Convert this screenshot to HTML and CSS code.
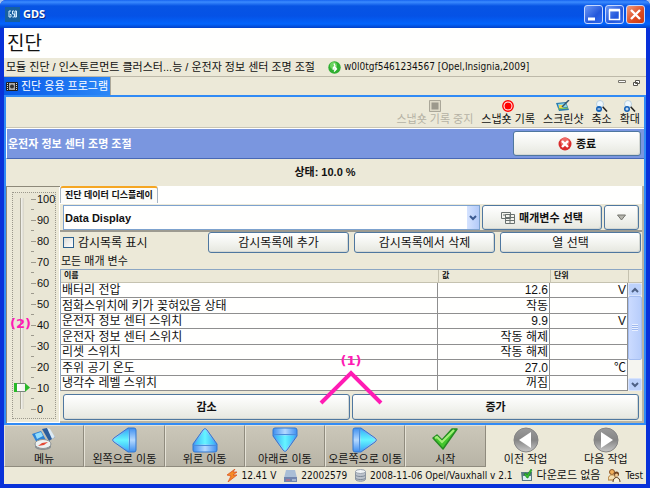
FILE: index.html
```
<!DOCTYPE html>
<html lang="ko">
<head>
<meta charset="utf-8">
<title>GDS</title>
<link rel="stylesheet" href="styles.css">
</head>
<body>
<div class="window">
  <header class="titlebar">
    <svg class="app-icon" width="15" height="15" viewBox="0 0 15 15" aria-hidden="true">
      <rect width="15" height="15" fill="#17609f"/>
      <path d="M6 4H4v6h2V7.500H5M9 4H7.500v3h2v3H7.500M11.500 4H10v6h1.500V4" fill="none" stroke="#d8efff" stroke-width="1"/>
    </svg>
    <span class="app-name">GDS</span>
    <div class="caption-buttons">
      <button class="caption" aria-label="최소화"><svg width="17" height="17" viewBox="0 0 17 17"><path d="M3 13h7" stroke="#fff" stroke-width="3"/></svg></button>
      <button class="caption" aria-label="최대화"><svg width="17" height="17" viewBox="0 0 17 17"><path d="M3.500 4.500h10v9h-10z" fill="none" stroke="#fff" stroke-width="1.500"/><path d="M3 4h11" stroke="#fff" stroke-width="2.500"/></svg></button>
      <button class="caption caption-close" aria-label="닫기"><svg width="17" height="17" viewBox="0 0 17 17"><path d="M4 4l9 9M13 4l-9 9" stroke="#fff" stroke-width="2.400"/></svg></button>
    </div>
  </header>

  <div class="body">
    <h1 class="page-title">진단</h1>
    <div class="crumbs">
      <span>모듈 진단 / 인스투르먼트 클러스터...능 / 운전자 정보 센터 조명 조절</span>
      <svg width="13" height="13" viewBox="0 0 13 13" aria-hidden="true"><circle cx="6.500" cy="6.500" r="6.200" fill="#2faf31"/><circle cx="5.500" cy="4.500" r="3.500" fill="#6bd45f"/><path d="M6 2.500l1 2.500-2 2M6.500 5.500L8.500 8 6 10.500M4.500 8h3" fill="none" stroke="#fff" stroke-width="1.300"/></svg>
      <span class="vin">w0l0tgf5461234567 [Opel,Insignia,2009]</span>
    </div>

    <div class="view-tabs">
      <a class="view-tab" href="#app">
        <svg width="12" height="9" viewBox="0 0 12 9" aria-hidden="true"><rect width="12" height="9" rx="1" fill="#222"/><rect x="3" y="1" width="6" height="7" fill="#aaa"/><circle cx="6" cy="4.500" r="2" fill="#333"/><path d="M1.500 1v7M10.500 1v7" stroke="#ddd" stroke-dasharray="1 1"/></svg>
        진단 응용 프로그램
      </a>
      <svg class="view-controls" width="22" height="8" viewBox="0 0 22 8" aria-hidden="true"><path d="M.5 1.500h7v2h-7z" fill="#fff" stroke="#77756c"/><path d="M17.500 1.500h4v3h-4zM15.500 3.500h4v3h-4z" fill="#fff" stroke="#55534c"/></svg>
    </div>

    <main class="frame" id="app">
      <div class="toolbar">
        <button class="tool" disabled><svg width="12" height="12" viewBox="0 0 12 12"><path d="M.5.500h11v11H.500z" fill="#dedac8" stroke="#aaa799"/><path d="M2.500 2.500h7v7h-7z" fill="#9c998c"/></svg>스냅숏 기록 중지</button>
        <button class="tool"><svg width="12" height="12" viewBox="0 0 12 12"><circle cx="6" cy="6" r="5.200" fill="#fff" stroke="#f00" stroke-width="1.400"/><circle cx="6" cy="6" r="3.500" fill="#f00"/></svg>스냅숏 기록</button>
        <button class="tool"><svg width="14" height="12" viewBox="0 0 14 12"><path d="M0 3l10-1 3 8-10 1z" fill="#2b7cae"/><path d="M2 4l8-1 1 4-8 1z" fill="#8ed8e8"/><path d="M3 5h4v3H3z" fill="#f3d84c"/><path d="M13 0L6 7" stroke="#33566c" stroke-width="1.500"/><path d="M2 9l10-1" stroke="#8bcf51"/></svg>스크린샷</button>
        <button class="tool"><svg width="13" height="12" viewBox="0 0 13 12"><path d="M7 6l5 5.500" stroke="#222" stroke-width="1.500"/><circle cx="5" cy="4" r="3.500" fill="#edf7fd" stroke="#b9cfdf"/><circle cx="4" cy="9" r="3" fill="#1462b9"/><path d="M2.500 9h3" stroke="#fff"/></svg>축소</button>
        <button class="tool"><svg width="13" height="12" viewBox="0 0 13 12"><path d="M7 6l5 5.500" stroke="#222" stroke-width="1.500"/><circle cx="5" cy="4" r="3.500" fill="#edf7fd" stroke="#b9cfdf"/><circle cx="4" cy="9" r="3" fill="#1462b9"/><path d="M2.500 9h3M4 7.500v3" stroke="#fff"/></svg>확대</button>
      </div>

      <div class="banner">
        <h2 class="banner-title">운전자 정보 센터 조명 조절</h2>
        <button class="btn btn-exit"><svg width="14" height="14" viewBox="0 0 14 14" aria-hidden="true"><circle cx="7" cy="7" r="6.500" fill="#d92b2b"/><circle cx="7" cy="5" r="4.500" fill="#ee6b66"/><path d="M4 4l6 6M10 4l-6 6" stroke="#fff" stroke-width="2.400"/></svg>종료</button>
      </div>

      <p class="state">상태: 10.0 %</p>

      <div class="work">
        <section class="gauge">
          <div class="gauge-inner">
            <input class="slider" type="range" min="0" max="100" value="10" aria-label="조명 밝기">
            <ol class="scale">
              <li>100</li><li></li><li>90</li><li></li><li>80</li><li></li><li>70</li><li></li><li>60</li><li></li><li>50</li><li></li><li>40</li><li></li><li>30</li><li></li><li>20</li><li></li><li>10</li><li></li><li>0</li>
            </ol>
          </div>
          <span class="note note-gauge">(2)</span>
        </section>

        <section class="data">
          <div class="data-tabs"><a class="data-tab" href="#params">진단 데이터 디스플레이</a></div>
          <div class="row row-select">
            <div class="select-box">
              <select aria-label="데이터 목록"><option>Data Display</option></select>
              <span class="select-arrow"><svg width="8" height="6" viewBox="0 0 8 6" aria-hidden="true"><path d="M1 1l3 3 3-3" fill="none" stroke="#3c5a91" stroke-width="2"/></svg></span>
            </div>
            <button class="btn btn-param"><svg width="14" height="12" viewBox="0 0 14 12" aria-hidden="true"><g fill="#f4f4ee" stroke="#69716f"><path d="M.5.500h9v6h-9zM4.500 2.500h9v9h-9z"/><path d="M4.500 5.500h9M4.500 8.500h9M9 2.500v9M2 3h3"/></g></svg>매개변수 선택</button>
            <button class="btn btn-more" aria-label="더 보기"><svg width="9" height="7" viewBox="0 0 9 7"><path d="M.5 1h8l-4 5z" fill="#b5b5ad" stroke="#74746e"/></svg></button>
          </div>
          <div class="row row-actions">
            <label class="check"><input type="checkbox">감시목록 표시</label>
            <button class="btn">감시목록에 추가</button>
            <button class="btn">감시목록에서 삭제</button>
            <button class="btn">열 선택</button>
          </div>
          <h3 class="list-title">모든 매개 변수</h3>
          <table class="params" id="params">
            <colgroup><col><col class="col-value"><col class="col-unit"><col class="col-scroll"></colgroup>
            <thead><tr><th>이름</th><th>값</th><th>단위</th><th></th></tr></thead>
            <tbody>
              <tr><td>배터리 전압</td><td>12.6</td><td>V</td>
                <td class="scroll-cell" rowspan="7">
                  <div class="scrollbar">
                    <button aria-label="위로"><svg width="8" height="6" viewBox="0 0 8 6"><path d="M1 5l3-3 3 3" fill="none" stroke="#4d6185" stroke-width="2"/></svg></button>
                    <div class="scroll-track"><div class="scroll-thumb"><i></i></div></div>
                    <button aria-label="아래로"><svg width="8" height="6" viewBox="0 0 8 6"><path d="M1 1l3 3 3-3" fill="none" stroke="#4d6185" stroke-width="2"/></svg></button>
                  </div>
                </td></tr>
              <tr><td>점화스위치에 키가 꽂혀있음 상태</td><td>작동</td><td></td></tr>
              <tr><td>운전자 정보 센터 스위치</td><td>9.9</td><td>V</td></tr>
              <tr><td>운전자 정보 센터 스위치</td><td>작동 해제</td><td></td></tr>
              <tr><td>리셋 스위치</td><td>작동 해제</td><td></td></tr>
              <tr><td>주위 공기 온도</td><td>27.0</td><td>℃</td></tr>
              <tr><td>냉각수 레벨 스위치</td><td>꺼짐</td><td></td></tr>
            </tbody>
          </table>
          <div class="adjust">
            <button class="btn btn-bold">감소</button>
            <button class="btn btn-bold">증가</button>
            <div class="note note-adjust">(1)<svg width="66" height="38" viewBox="0 0 66 38" aria-hidden="true"><path d="M3 34L33 4l30 30" fill="none" stroke="#ff1cb4" stroke-width="4"/></svg></div>
          </div>
        </section>
      </div>
    </main>

    <nav class="nav">
      <button class="nav-btn"><svg width="26" height="24" viewBox="0 0 26 24"><path d="M1 7l9-3 5 9-9 3z" fill="#2d83d7"/><path d="M4 7l6-2 2 4-6 3z" fill="#94dfff"/><path d="M11 2l5-1 8 9-6 4z" fill="#2c5d9c"/><path d="M16 1l3 1 5 8-3 2z" fill="#dceaf4"/><path d="M4 17v3c1 4 15 4 16 0v-3" fill="#8a8f91"/><ellipse cx="12" cy="17" rx="8" ry="4.500" fill="#edf1f1" stroke="#909596"/><path d="M7 19l4-3 6-1-4 3z" fill="#e34935"/></svg>메뉴</button>
      <button class="nav-btn"><svg width="26" height="26" viewBox="0 0 26 26"><use href="#arrow" transform="rotate(-90 13 13)"/></svg>왼쪽으로 이동</button>
      <button class="nav-btn"><svg width="26" height="26" viewBox="0 0 26 26"><defs><linearGradient id="sky" x1="0" x2="1"><stop offset="0" stop-color="#38b5f8"/><stop offset=".5" stop-color="#66f4ff"/><stop offset="1" stop-color="#38aff6"/></linearGradient><linearGradient id="base" x1="0" x2="1"><stop offset="0" stop-color="#3c8ef0"/><stop offset=".5" stop-color="#b5d9ff"/><stop offset="1" stop-color="#3c8ef0"/></linearGradient><linearGradient id="ball" x2="0" y2="1"><stop offset="0" stop-color="#9a9a9a"/><stop offset=".5" stop-color="#858585"/><stop offset="1" stop-color="#c8c8c8"/></linearGradient><g id="arrow"><path d="M11 3q2-3 4 0l10 14v6q0 2-2 2H3q-2 0-2-2v-6z" fill="url(#base)" stroke="#3277ce"/><path d="M12 3.500q1-1.500 2 0l9.500 14h-21z" fill="url(#sky)"/><path d="M1.500 18.500h23" stroke="#4a8ddb"/></g></defs><use href="#arrow"/></svg>위로 이동</button>
      <button class="nav-btn"><svg width="26" height="26" viewBox="0 0 26 26"><use href="#arrow" transform="rotate(180 13 13)"/></svg>아래로 이동</button>
      <button class="nav-btn"><svg width="26" height="26" viewBox="0 0 26 26"><use href="#arrow" transform="rotate(90 13 13)"/></svg>오른쪽으로 이동</button>
      <button class="nav-btn"><svg width="28" height="24" viewBox="0 0 28 24"><path d="M2 11l4-3 5 5L21 2h5L12 22z" fill="#43c62d" stroke="#258b22" stroke-width="1.500" stroke-linejoin="round"/><path d="M4 11l2-1 5 5L23 3" fill="none" stroke="#a2ef78" stroke-width="2"/></svg>시작</button>
      <button class="nav-btn nav-flat"><svg width="26" height="26" viewBox="0 0 26 26"><circle cx="13" cy="13" r="12" fill="url(#ball)" stroke="#858585"/><path d="M18 5v16L6 13z" fill="#fff"/></svg>이전 작업</button>
      <button class="nav-btn nav-flat"><svg width="26" height="26" viewBox="0 0 26 26"><circle cx="13" cy="13" r="12" fill="url(#ball)" stroke="#858585"/><path d="M8 5v16l12-8z" fill="#fff"/></svg>다음 작업</button>
    </nav>

    <footer class="statusbar">
      <span class="stat"><svg width="11" height="13" viewBox="0 0 11 13"><path d="M8 0L0 6l4 1-3 6 9-7H6l4-3H6z" fill="#f58b24" stroke="#d94a1d" stroke-width=".7"/></svg>12.41 V</span>
      <span class="stat"><svg width="13" height="12" viewBox="0 0 13 12"><path d="M2 0h9l2 8H0z" fill="#a9bed6"/><path d="M0 7h13v5H0z" fill="#7186ae"/><path d="M2 10h4" stroke="#db6980"/><path d="M8 10h4" stroke="#d5e3f2"/></svg>22002579</span>
      <span class="stat"><svg width="11" height="13" viewBox="0 0 11 13"><path d="M.5 2v8c0 3 10 3 10 0V2" fill="#bcc3cc" stroke="#8f98a3"/><ellipse cx="5.500" cy="2.500" rx="5" ry="2" fill="#f2f5f7" stroke="#9aa3ad"/><path d="M.5 6c1 2 9 2 10 0M.5 9c1 2 9 2 10 0" fill="none" stroke="#7c8895"/></svg>2008-11-06 Opel/Vauxhall v 2.1</span>
      <span class="stat stat-ko"><svg width="12" height="13" viewBox="0 0 12 13"><path d="M0 3h11v9H1z" fill="#597983"/><path d="M2 7h8v4H2z" fill="#dceef1"/><path d="M3 5l2-1 1 2 4-6 1 1-4 8H6z" fill="#37bd2e" stroke="#148126" stroke-width=".6"/></svg>다운로드 없음</span>
      <span class="stat"><svg width="13" height="13" viewBox="0 0 13 13"><circle cx="4" cy="3" r="2.500" fill="#f2b05b" stroke="#8b5426"/><path d="M0 11c0-7 8-7 8 0z" fill="#f4dfb3" stroke="#b37a32"/><circle cx="8.500" cy="5" r="2.500" fill="#70431f"/><circle cx="8.500" cy="6" r="1.500" fill="#f7cc91"/><path d="M5 13c0-6 7-6 7 0" fill="#f9f2dc" stroke="#583619"/></svg>Test</span>
    </footer>
  </div>
</div>
</body>
</html>
```
FILE: styles.css
```
:root {
  --beige: #ece9d8;
  --steel: #4f779f;
  --line: #aca899;
  --pink: #ff1cb4;
}

* { box-sizing: border-box; }

body {
  margin: 0;
  background: #a9c4ee;
  color: #111;
  font: 11px/14px "Liberation Sans", "Noto Sans CJK KR", sans-serif;
}

h1, h2, h3, p, ol { margin: 0; padding: 0; font-weight: 400; }
button, input, select { margin: 0; font: inherit; color: inherit; }
button { padding: 0; border: 0; background: none; }
a { color: inherit; text-decoration: none; }
svg { display: block; flex: none; }

.window {
  display: flex;
  flex-direction: column;
  height: 100vh;
  min-height: 440px;
  padding: 0 4px 4px;
  border-radius: 6px 6px 0 0;
  background: #0831d9;
  overflow: hidden;
}

.titlebar {
  display: flex;
  align-items: center;
  gap: 3px;
  height: 28px;
  margin: 0 -4px;
  padding: 0 5px;
  flex: none;
  background: linear-gradient(#1664f0 0, #3b8bff 2px, #0754e4 6px, #0552e6 16px, #0364fb 24px, #0241c8 28px);
}
.app-name {
  color: #fff;
  font: 700 11px/14px "Noto Sans", sans-serif;
  text-shadow: 1px 1px #0b2a80;
}
.caption-buttons { display: flex; gap: 2px; margin-left: auto; }
.caption {
  width: 19px;
  height: 19px;
  border: 1px solid #c6d8ff;
  border-radius: 3px;
  background: linear-gradient(135deg, #6c98f5, #2457db 60%, #2f6af0);
}
.caption-close { background: linear-gradient(135deg, #f09a7c, #dd4a20 60%, #c93a12); }

.body {
  display: flex;
  flex-direction: column;
  flex: 1;
  min-height: 0;
  background: var(--beige);
}
.page-title {
  height: 30px;
  padding-left: 3px;
  background: #fffffe;
  font-size: 19px;
  line-height: 32px;
}
.crumbs {
  display: flex;
  align-items: center;
  gap: 3px;
  height: 18px;
  padding-left: 2px;
  white-space: nowrap;
}
.crumbs svg { margin-left: 10px; }
.vin, .stat { font-family: "DejaVu Sans Condensed", "DejaVu Sans", "Noto Sans CJK KR", sans-serif; font-size: 10px; }

.view-tabs {
  display: flex;
  justify-content: space-between;
  height: 19px;
  border-top: 1px solid #bdb9a9;
}
.view-tab {
  display: flex;
  align-items: center;
  gap: 3px;
  padding: 0 2px;
  border-right: 1px solid var(--line);
  background: linear-gradient(90deg, #0759e8, #2b87f7);
  color: #fff;
}
.view-controls { margin: 2px 6px 0 0; }

.frame {
  display: flex;
  flex-direction: column;
  flex: 1;
  min-height: 0;
  border: 2px solid #318bf5;
}

.toolbar {
  display: flex;
  justify-content: flex-end;
  gap: 8px;
  height: 31px;
  padding: 3px 4px 0 0;
  border-bottom: 1px solid #c9c5b4;
  flex: none;
}
.tool {
  display: flex;
  flex-direction: column;
  align-items: center;
  line-height: 14px;
}
.tool:disabled { color: #b5b2a4; }

.banner {
  display: flex;
  align-items: center;
  justify-content: space-between;
  height: 31px;
  padding: 0 3px 0 1px;
  border: solid #fff;
  border-width: 1px 0 0 1px;
  border-bottom: 1px solid #4868b5;
  background: #7a96df;
  flex: none;
}
.banner-title { color: #fff; font-size: 11px; font-weight: 700; }

.btn {
  display: flex;
  align-items: center;
  justify-content: center;
  gap: 4px;
  border: 1px solid var(--steel);
  border-radius: 3px;
  background: linear-gradient(#fff, #f3f4f0 50%, #e6e7df);
  box-shadow: inset -1px -1px #d4d8d4;
  font-size: 12px;
  white-space: nowrap;
}
.btn-exit, .btn-bold, .btn-param { font-size: 11px; font-weight: 700; }
.btn-exit { width: 128px; height: 25px; }

.state {
  height: 27px;
  line-height: 26px;
  text-align: center;
  font-weight: 700;
  flex: none;
}

.work { display: flex; flex: 1; min-height: 0; }

.gauge {
  position: relative;
  width: 54px;
  padding: 5px 4px 4px 5px;
  border: solid #8d897a;
  border-width: 1px 0 0 1px;
  box-shadow: inset -1px -1px #fff;
  flex: none;
}
.gauge-inner {
  display: flex;
  height: 100%;
  border: 1px dotted #9b988c;
  background: #e9e6d5;
}
.slider {
  appearance: none;
  writing-mode: vertical-lr;
  direction: rtl;
  width: 18px;
  height: calc(100% - 6px);
  margin: 1px 0 5px;
  background: linear-gradient(90deg, #aaa798 1px, #f4f4f0 1px, #d5d2c4) center / 4px calc(100% - 8px) no-repeat;
}
.slider::-webkit-slider-thumb {
  appearance: none;
  width: 16px;
  height: 9px;
  background:
    linear-gradient(#77877c, #77877c) top / 68% 1px no-repeat,
    linear-gradient(#77877c, #77877c) bottom / 68% 1px no-repeat,
    linear-gradient(90deg, #29b929 3px, #fff 3px, #f0f0ec 11px, #29b929 11px);
  clip-path: polygon(0 0, 68% 0, 100% 50%, 68% 100%, 0 100%);
}
.scale {
  display: flex;
  flex-direction: column;
  justify-content: space-between;
  margin: 6px 0 9px;
  list-style: none;
}
.scale li {
  display: flex;
  align-items: center;
  gap: 1px;
  height: 0;
}
.scale li::before { content: ""; width: 3px; height: 1px; background: #9c998d; }
.scale li:nth-child(odd)::before { width: 5px; }

.data {
  display: flex;
  flex-direction: column;
  flex: 1;
  min-width: 0;
  border-right: 2px solid #b8b4a4;
  border-bottom: 2px solid #b8b4a4;
}
.data-tabs { height: 18px; background: #fffffe; flex: none; }
.data-tab {
  display: inline-block;
  height: 17px;
  padding: 0 4px;
  border: 1px solid #a7b5c4;
  border-top: 2px solid #f5a623;
  border-bottom: 0;
  border-radius: 3px 3px 0 0;
  background: #fcfcfa;
  font-size: 9px;
  font-weight: 700;
  line-height: 14px;
  vertical-align: top;
}

.row { display: flex; flex: none; }
.row-select {
  gap: 2px;
  height: 28px;
  padding: 1px 3px 0;
  border-bottom: 2px solid #9d9b91;
}
.select-box { position: relative; flex: 1; }
.select-box select {
  appearance: none;
  width: 100%;
  height: 100%;
  padding: 0 16px 0 1px;
  border: 1px solid #7da2ce;
  border-radius: 0;
  background: #fffffe;
  font-weight: 700;
}
.select-arrow {
  position: absolute;
  inset: 1px 1px 1px auto;
  display: grid;
  place-items: center;
  width: 12px;
  background: linear-gradient(90deg, #d5e3ff, #b3caf8);
  pointer-events: none;
}
.btn-param { width: 120px; }
.btn-more { width: 35px; }

.row-actions {
  display: grid;
  grid-template-columns: 140px repeat(3, 1fr);
  gap: 5px;
  height: 22px;
  padding: 0 1px 1px 3px;
}
.check { display: flex; align-items: center; gap: 4px; font-size: 12px; }
.check input {
  appearance: none;
  width: 11px;
  height: 11px;
  border: 1px solid #2d628f;
  background: linear-gradient(135deg, #dcdcd7, #fff);
}
.list-title { padding-left: 1px; font-size: 11px; line-height: 15px; flex: none; }

.params {
  width: 100%;
  table-layout: fixed;
  border-collapse: separate;
  border-spacing: 0;
  border-top: 1px solid #8ba6c3;
  border-left: 1px solid #8ba6c3;
  flex: none;
}
.col-value { width: 112px; }
.col-unit { width: 78px; }
.col-scroll { width: 14px; }
.params th {
  height: 13px;
  padding: 0 3px;
  border-bottom: 1px solid #c5c2b0;
  font-size: 8px;
  line-height: 12px;
  text-align: left;
}
.params th + th { border-left: 1px solid #c5c2b0; }
.params td {
  height: 15px;
  padding: 0 1px;
  border: solid #8f8f8f;
  border-width: 0 1px 1px 0;
  background: #fffffe;
  font-size: 12px;
  line-height: 14px;
  white-space: nowrap;
}
.params tr:nth-child(even) td { height: 16px; }
.params td + td { text-align: right; }
.params .scroll-cell { padding: 0; border: 0; background: #f5f5f0; }
.scrollbar {
  display: flex;
  flex-direction: column;
  height: 108px;
}
.scrollbar button {
  display: grid;
  place-items: center;
  width: 100%;
  height: 13px;
  border: 1px solid #d7e3fc;
  border-radius: 2px;
  background: #bdd2fb;
}
.scroll-track { flex: 1; }
.scroll-thumb {
  display: grid;
  place-items: center;
  height: 78%;
  border: 1px solid #a4bdf0;
  border-radius: 2px;
  background: linear-gradient(90deg, #cbdbff, #b7cdfb);
}
.scroll-thumb i { width: 6px; height: 7px; background: repeating-linear-gradient(#e9f0ff 0 1px, #9db8ef 1px 2px); }

.adjust {
  position: relative;
  display: grid;
  grid-template-columns: 1fr 1fr;
  gap: 2px;
  flex: 1;
  padding: 3px 3px 1px;
}

.note {
  position: absolute;
  color: var(--pink);
  font: 700 13px/14px "DejaVu Sans", sans-serif;
}
.note-gauge { left: 3px; top: 55%; }
.note-adjust {
  display: flex;
  flex-direction: column;
  align-items: center;
  gap: 1px;
  left: 50%;
  bottom: 14px;
  translate: -50% 0;
}

.nav {
  display: grid;
  grid-template-columns: repeat(8, 1fr);
  height: 42px;
  flex: none;
}
.nav-btn {
  display: flex;
  flex-direction: column;
  align-items: center;
  justify-content: space-between;
  padding-top: 1px;
  border: 1px solid;
  border-color: #e5e2d6 #8f8b7e #8f8b7e #e5e2d6;
  background: linear-gradient(#cbc7b9, #b8b4a6);
  line-height: 14px;
}
.nav-btn svg { margin-bottom: -3px; }
.nav-flat { border-color: transparent; background: none; }

.statusbar {
  display: flex;
  align-items: center;
  justify-content: flex-end;
  gap: 8px;
  height: 17px;
  padding-right: 3px;
  flex: none;
  white-space: nowrap;
}
.stat { display: flex; align-items: center; gap: 4px; }
.stat-ko { font-size: 11px; }
```
